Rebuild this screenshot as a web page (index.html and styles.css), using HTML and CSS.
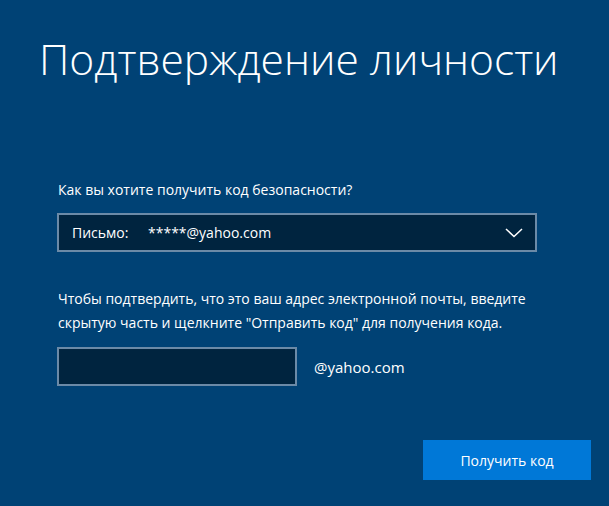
FILE: index.html
```html
<!DOCTYPE html>
<html lang="ru">
<head>
  <meta charset="UTF-8" />
  <title>Подтверждение личности</title>
  <link rel="stylesheet" href="styles.css">
</head>
<body>
  <div class="page">
    <h1 class="title">Подтверждение личности</h1>

    <div class="field">
      <label class="label" for="method">Как вы хотите получить код безопасности?</label>
      <div class="select" id="method">
        <span class="select-kind">Письмо:</span>
        <span class="select-value">*****@yahoo.com</span>
        <svg class="chevron" width="18" height="10" viewBox="0 0 18 10">
          <path d="M1 1 L9 8.5 L17 1" fill="none" stroke="#ffffff" stroke-width="1.5" />
        </svg>
      </div>
    </div>

    <p class="hint">Чтобы подтвердить, что это ваш адрес электронной почты, введите скрытую часть и щелкните "Отправить код" для получения кода.</p>

    <div class="email-row">
      <input class="email-input" type="text" />
      <span class="domain">@yahoo.com</span>
    </div>

    <div class="actions">
      <button class="btn">Получить код</button>
    </div>
  </div>
</body>
</html>
```

FILE: styles.css
```css
body {
  margin: 0;
  background-color: #004275;
  color: #ffffff;
  font-family: "Open Sans", "Noto Sans", Arial, sans-serif;
  width: 609px;
  height: 506px;
  overflow: hidden;
}
.page {
  padding: 30px 18px 0 57px;
}
.title {
  margin: 0 0 0 -18px;
  font-size: 42.5px;
  font-weight: 300;
  line-height: 58px;
  letter-spacing: 0;
}
.field {
  margin-top: 92px;
}
.label {
  display: block;
  font-size: 14px;
  line-height: 20px;
  margin-left: 1px;
  margin-bottom: 13px;
}
.select {
  box-sizing: border-box;
  width: 480px;
  height: 39px;
  border: 2px solid #6b8aa7;
  background-color: #00243f;
  display: flex;
  align-items: center;
  padding: 0 12px 0 13px;
  font-size: 14px;
}
.select-kind {
  width: 76px;
}
.select-value {
  flex: 1;
}
.chevron {
  display: block;
}
.hint {
  margin: 35px 0 0 1px;
  width: 500px;
  font-size: 14px;
  line-height: 24px;
}
.email-row {
  display: flex;
  align-items: center;
  margin-top: 12px;
}
.email-input {
  box-sizing: border-box;
  width: 240px;
  height: 39px;
  border: 2px solid #6b8aa7;
  background-color: #00243f;
  color: #ffffff;
  margin: 0;
}
.domain {
  margin-left: 17px;
  font-size: 15px;
}
.actions {
  display: flex;
  justify-content: flex-end;
  margin-top: 54px;
}
.btn {
  width: 168px;
  height: 40px;
  border: none;
  background-color: #0078d7;
  color: #ffffff;
  font-family: inherit;
  font-size: 14px;
  cursor: pointer;
}
```
